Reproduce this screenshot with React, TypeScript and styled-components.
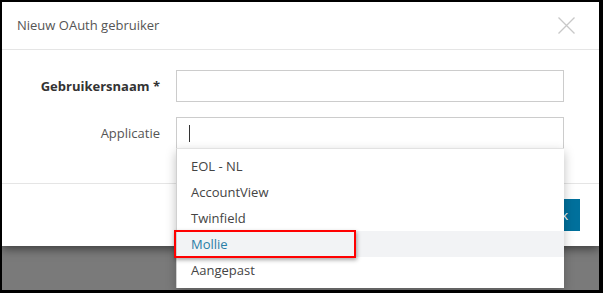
import React from "react";
import styled, { createGlobalStyle } from "styled-components";

const Global = createGlobalStyle`
  html, body { margin: 0; padding: 0; background: #000; }
  body { font-family: "Open Sans", "Liberation Sans", sans-serif; }
  * { box-sizing: border-box; }
`;

const Frame = styled.div`
  width: 603px;
  height: 293px;
  background: #000;
  padding: 2px 4px 3px 2px;
`;

const Viewport = styled.div`
  position: relative;
  height: 288px;
  background: #7a7a7a;
`;

const Modal = styled.div`
  background: #fff;
  height: 244px;
  box-shadow: 0 3px 9px rgba(0, 0, 0, 0.5);
  display: flex;
  flex-direction: column;
`;

const Header = styled.div`
  height: 48px;
  border-bottom: 1px solid #e5e5e5;
  display: flex;
  align-items: center;
  justify-content: space-between;
  padding: 0 24px 2px 15px;
`;

const Title = styled.div`
  font-size: 13px;
  color: #555;
`;

const Close = styled.svg`
  width: 17px;
  height: 17px;
  margin-top: 1px;
`;

const Body = styled.div`
  padding: 20px 0 0 0;
  height: 134px;
  border-bottom: 1px solid #e5e5e5;
  display: flex;
  flex-direction: column;
  gap: 15px;
`;

const Row = styled.div`
  display: grid;
  grid-template-columns: 158px 388px;
  column-gap: 16px;
  align-items: center;
`;

const Label = styled.label<{ $bold?: boolean }>`
  text-align: right;
  font-size: 13px;
  font-weight: ${(p) => (p.$bold ? 700 : 400)};
  color: ${(p) => (p.$bold ? "#333" : "#555")};
`;

const Field = styled.div`
  position: relative;
`;

const Input = styled.div`
  height: 32px;
  border: 1px solid #cccccc;
  background: #fff;
  padding-left: 12px;
  display: flex;
  align-items: center;
`;

const Caret = styled.span`
  display: block;
  width: 1px;
  height: 17px;
  background: #333;
`;

const Footer = styled.div`
  flex: 1;
  display: flex;
  justify-content: flex-end;
  align-items: center;
  padding: 0 19px 0 0;
`;

const Button = styled.button`
  height: 32px;
  padding: 0 12px;
  background: #00709c;
  color: #fff;
  border: none;
  font-family: inherit;
  font-size: 13px;
`;

const Menu = styled.ul`
  position: absolute;
  left: 0;
  top: 31px;
  width: 388px;
  margin: 0;
  padding: 4px 0 5px;
  list-style: none;
  background: #fff;
  border-left: 1px solid #d0d0d0;
  border-top: 1px solid #e2e2e2;
  box-shadow: 0 4px 10px rgba(0, 0, 0, 0.25);
  z-index: 5;
`;

const Item = styled.li<{ $active?: boolean }>`
  position: relative;
  height: 26px;
  line-height: 26px;
  padding-left: 14px;
  font-size: 13px;
  color: ${(p) => (p.$active ? "#2b7ea6" : "#444")};
  background: ${(p) => (p.$active ? "#f2f3f5" : "transparent")};
`;

const Highlight = styled.span`
  position: absolute;
  left: -3px;
  top: -1px;
  width: 182px;
  height: 28px;
  border: 2px solid #f00;
  box-shadow: 1px 2px 4px rgba(0, 0, 0, 0.35);
`;

const options = ["EOL - NL", "AccountView", "Twinfield", "Mollie", "Aangepast"];

export default function App() {
  return (
    <>
      <Global />
      <Frame>
        <Viewport>
          <Modal>
            <Header>
              <Title>Nieuw OAuth gebruiker</Title>
              <Close viewBox="0 0 17 17">
                <path d="M0.5 0.5 L16.5 16.5 M16.5 0.5 L0.5 16.5" stroke="#c8c8c8" strokeWidth="1.3" fill="none" />
              </Close>
            </Header>
            <Body>
              <Row>
                <Label $bold>Gebruikersnaam *</Label>
                <Input />
              </Row>
              <Row>
                <Label>Applicatie</Label>
                <Field>
                  <Input>
                    <Caret />
                  </Input>
                  <Menu>
                    {options.map((o) => (
                      <Item key={o} $active={o === "Mollie"}>
                        {o}
                        {o === "Mollie" && <Highlight />}
                      </Item>
                    ))}
                  </Menu>
                </Field>
              </Row>
            </Body>
            <Footer>
              <Button>Ok</Button>
            </Footer>
          </Modal>
        </Viewport>
      </Frame>
    </>
  );
}
